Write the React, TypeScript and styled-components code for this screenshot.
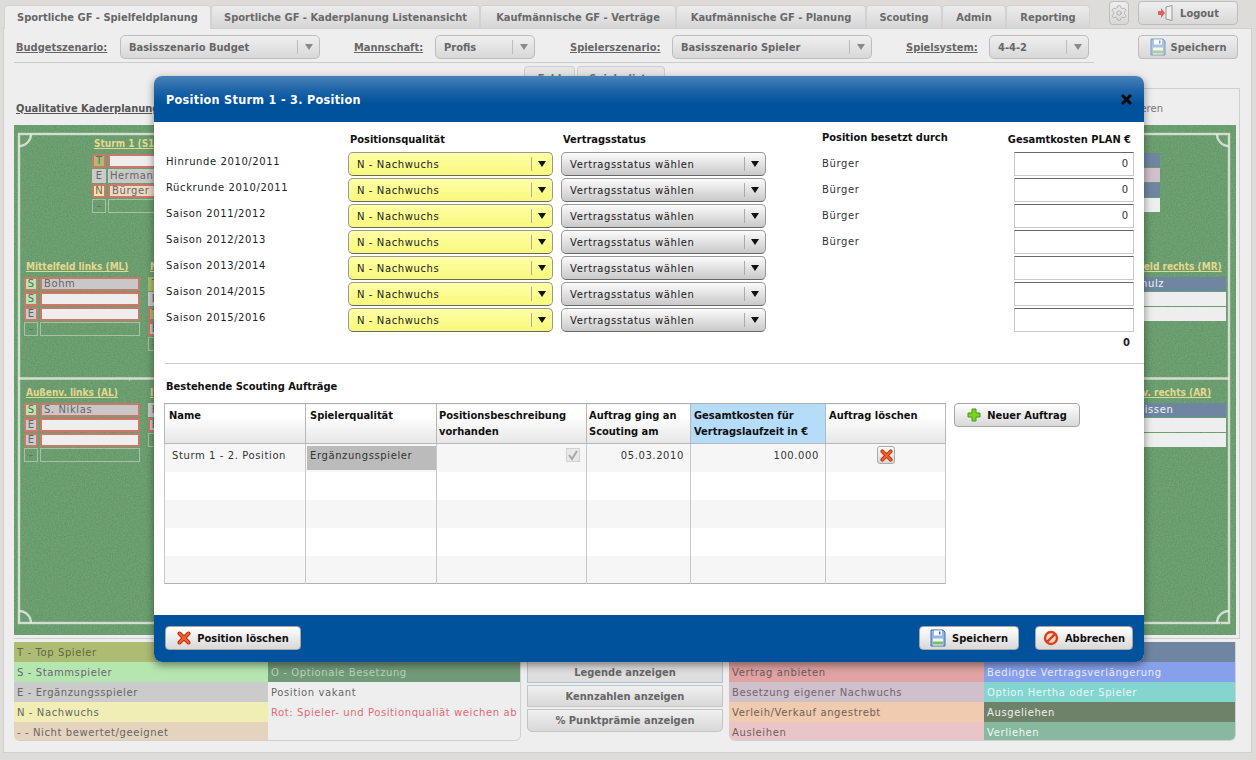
import React from "react";
import styled, { createGlobalStyle, css } from "styled-components";
import { Settings } from "lucide-react";

const REGULAR = `"DejaVu Sans", Verdana, sans-serif`;
const BOLD = `"DejaVu Sans Condensed", "DejaVu Sans", Tahoma, sans-serif`;

const spaced = css`
  letter-spacing: 0.6px;
`;

const QUALITY_COLORS: Record<string, string> = {
  T: "#adbb73",
  S: "#b6e6b0",
  E: "#cbcbcb",
  N: "#f3e5a8",
  "-": "transparent",
};

type Slot = {
  q: string;
  name?: string;
  fill?: string;
  ink?: string;
  bad?: boolean;
};

type Spot = { title: string; x: number; y: number; flushTitle?: boolean; slots: Slot[] };

const SPOTS: Spot[] = [
  {
    title: "Sturm 1 (S1)",
    x: 78,
    y: 12,
    slots: [
      { q: "T", fill: "#eeeeee", bad: true },
      { q: "E", name: "Hermann", fill: "#c8c8c8" },
      { q: "N", name: "Bürger", fill: "#eed9c5", bad: true },
      { q: "-" },
    ],
  },
  {
    title: "Mittelfeld links (ML)",
    x: 10,
    y: 135,
    slots: [
      { q: "S", name: "Bohm", fill: "#c8c8c8", bad: true },
      { q: "S", fill: "#eeeeee", bad: true },
      { q: "E", fill: "#eeeeee", bad: true },
      { q: "-" },
    ],
  },
  {
    title: "M",
    x: 134,
    y: 135,
    slots: [
      { q: "T", fill: "#c8c8c8" },
      { q: "E", fill: "#eeeeee" },
      { q: "T", fill: "#eeeeee", bad: true },
      { q: "E", fill: "#eeeeee", bad: true },
      { q: "-" },
    ],
  },
  {
    title: "Außenv. links (AL)",
    x: 10,
    y: 261,
    slots: [
      { q: "S", name: "S. Niklas", fill: "#c8c8c8", bad: true },
      { q: "E", fill: "#eeeeee", bad: true },
      { q: "E", fill: "#eeeeee", bad: true },
      { q: "-" },
    ],
  },
  {
    title: "I",
    x: 134,
    y: 261,
    slots: [
      { q: "E", fill: "#c8c8c8" },
      { q: "E", fill: "#eeeeee", bad: true },
      { q: "-" },
    ],
  },
  {
    title: "",
    x: 1030,
    y: 11,
    slots: [
      { q: "S", fill: "#6f86a2" },
      { q: "E", fill: "#d0c0cc" },
      { q: "N", fill: "#6f86a2" },
      { q: "-", fill: "#eeeeee" },
    ],
  },
  {
    title: "Mittelfeld rechts (MR)",
    x: 1096,
    y: 135,
    flushTitle: true,
    slots: [
      { q: "S", name: "Schulz", fill: "#6f86a2", ink: "#f4f4f4" },
      { q: "E", fill: "#eeeeee" },
      { q: "-", fill: "#eeeeee" },
    ],
  },
  {
    title: "Außenv. rechts (AR)",
    x: 1096,
    y: 261,
    flushTitle: true,
    slots: [
      { q: "S", name: "Weissen", fill: "#6f86a2", ink: "#f4f4f4" },
      { q: "E", fill: "#eeeeee" },
      { q: "-", fill: "#eeeeee" },
    ],
  },
];

const TABS = [
  { label: "Sportliche GF - Spielfeldplanung", width: 207, active: true },
  { label: "Sportliche GF - Kaderplanung Listenansicht", width: 269 },
  { label: "Kaufmännische GF - Verträge", width: 196 },
  { label: "Kaufmännische GF - Planung", width: 190 },
  { label: "Scouting", width: 76 },
  { label: "Admin", width: 64 },
  { label: "Reporting", width: 84 },
];

const SEASONS = [
  { label: "Hinrunde 2010/2011", holder: "Bürger", cost: "0" },
  { label: "Rückrunde 2010/2011", holder: "Bürger", cost: "0" },
  { label: "Saison 2011/2012", holder: "Bürger", cost: "0" },
  { label: "Saison 2012/2013", holder: "Bürger", cost: "" },
  { label: "Saison 2013/2014", holder: "", cost: "" },
  { label: "Saison 2014/2015", holder: "", cost: "" },
  { label: "Saison 2015/2016", holder: "", cost: "" },
];

const LEGEND_LEFT = [
  ["T - Top Spieler", "#adbb73", "#5d6a44"],
  ["S - Stammspieler", "#b6e6b0", "#667"],
  ["E - Ergänzungsspieler", "#cbcbcb", "#666"],
  ["N - Nachwuchs", "#f0edb5", "#666"],
  ["- - Nicht bewertet/geeignet", "#e5d4bd", "#666"],
];

const LEGEND_MIDDLE = [
  ["", "#eeeeee", "#666"],
  ["O - Optionale Besetzung", "#719a78", "#b8d4bc"],
  ["Position vakant", "#eeeeee", "#666"],
  ["Rot: Spieler- und Positionqualiät weichen ab", "#eeeeee", "#e06a74"],
  ["", "#eeeeee", "#666"],
];

const LEGEND_RIGHT_A = [
  ["", "#6f86a2", "#eee"],
  ["Vertrag anbieten", "#e0a3a3", "#6d5a5a"],
  ["Besetzung eigener Nachwuchs", "#d0c0cc", "#6d6670"],
  ["Verleih/Verkauf angestrebt", "#f0cbb0", "#6d6258"],
  ["Ausleihen", "#eac5c8", "#6d5f60"],
];

const LEGEND_RIGHT_B = [
  ["", "#6f86a2", "#eee"],
  ["Bedingte Vertragsverlängerung", "#86a0ec", "#e8eefc"],
  ["Option Hertha oder Spieler", "#84d4d0", "#e6f8f6"],
  ["Ausgeliehen", "#6e8269", "#f0f0ea"],
  ["Verliehen", "#88b8a0", "#f0f8f2"],
];

const COLUMNS = [141, 131, 150, 104, 135, 120];

const GlobalStyle = createGlobalStyle`
  html, body {
    margin: 0;
    padding: 0;
  }
  body {
    font-family: ${REGULAR};
    font-size: 10px;
    color: #333;
  }
`;

const Page = styled.div`
  position: relative;
  width: 1256px;
  height: 760px;
  overflow: hidden;
  background: #dddcd9;
`;

const TopBar = styled.div`
  display: flex;
  height: 28px;
  padding: 0 18px 0 4px;
`;

const Tabs = styled.div`
  display: flex;
  margin-top: 5px;
`;

const Tab = styled.div<{ $width: number; $active?: boolean }>`
  box-sizing: border-box;
  width: ${({ $width }) => $width}px;
  height: 23px;
  display: flex;
  align-items: center;
  justify-content: center;
  font: bold 11px ${BOLD};
  color: #6a6a6a;
  border: 1px solid #d2d2d2;
  border-bottom: none;
  border-radius: 4px 4px 0 0;
  background: linear-gradient(#ececec, #d6d6d6);
  ${({ $active }) =>
    $active &&
    css`
      height: 24px;
      color: #666;
      background: #eeeeee;
    `}
`;

const TopActions = styled.div`
  display: flex;
  margin-left: auto;
  padding-top: 1px;
  gap: 9px;
`;

const GearButton = styled.div`
  box-sizing: border-box;
  width: 20px;
  height: 24px;
  display: flex;
  align-items: center;
  justify-content: center;
  border: 1px solid #bdbdbd;
  border-radius: 4px;
  background: linear-gradient(#eeeeee, #d8d8d8);
  color: #a8a8a8;
`;

const FadedButton = styled.div`
  box-sizing: border-box;
  width: 100px;
  height: 24px;
  display: flex;
  align-items: center;
  justify-content: center;
  gap: 5px;
  font: bold 11px ${BOLD};
  color: #666;
  border: 1px solid #bdbdbd;
  border-radius: 4px;
  background: linear-gradient(#eeeeee, #d8d8d8);
`;

const Panel = styled.div`
  box-sizing: border-box;
  height: 725px;
  margin: 0 4px 0 3px;
  padding: 0 10px;
  background: #eeeeee;
  border: 1px solid #cfcfcf;
`;

const Toolbar = styled.div`
  display: flex;
  align-items: center;
  height: 24px;
  margin-top: 6px;
  padding-left: 2px;
`;

const ToolGroup = styled.div<{ $after?: number }>`
  display: flex;
  align-items: center;
  margin-right: ${({ $after }) => $after ?? 34}px;
`;

const ToolLabel = styled.span<{ $width: number }>`
  width: ${({ $width }) => $width}px;
  font: bold 11px ${BOLD};
  color: #666;
  text-decoration: underline;
`;

const ToolSelect = styled.div<{ $width: number }>`
  box-sizing: border-box;
  width: ${({ $width }) => $width}px;
  height: 24px;
  display: flex;
  align-items: center;
  justify-content: space-between;
  padding-left: 8px;
  font: bold 11px ${BOLD};
  color: #666;
  border: 1px solid #bdbdbd;
  border-radius: 5px;
  background: linear-gradient(#efefef, #d8d8d8);
`;

const ToolCaret = styled.span`
  width: 21px;
  height: 14px;
  display: flex;
  align-items: center;
  justify-content: center;
  border-left: 1px solid #bbb;
  &::after {
    content: "";
    border: 4px solid transparent;
    border-top: 6px solid #8a8a8a;
    border-bottom: none;
  }
`;

const ToolSave = styled(FadedButton)`
  margin-left: auto;
  margin-right: 3px;
`;

const ToolRule = styled.div`
  width: 1080px;
  height: 1px;
  margin-top: 3px;
  background: #cccccc;
`;

const SubTabs = styled.div`
  display: flex;
  gap: 2px;
  height: 22px;
  margin-top: 3px;
  padding-left: 510px;
`;

const SubTab = styled.div<{ $width: number }>`
  box-sizing: border-box;
  width: ${({ $width }) => $width}px;
  padding-top: 5px;
  text-align: center;
  font: bold 11px ${BOLD};
  color: #777;
  border: 1px solid #cfcfcf;
  border-bottom: none;
  border-radius: 4px 4px 0 0;
  background: #e6e6e6;
`;

const ContentBox = styled.div`
  box-sizing: border-box;
  width: 1226px;
  height: 551px;
  border-right: 1px solid #cfcfcf;
  border-bottom: 1px solid #cfcfcf;
`;

const BoxTopRule = styled.div`
  width: 500px;
  height: 1px;
  margin-left: auto;
  background: #cfcfcf;
`;

const BoxHead = styled.div`
  display: flex;
  align-items: center;
  justify-content: space-between;
  height: 36px;
  padding: 2px 0 0 2px;
  box-sizing: border-box;
`;

const BoxTitle = styled.span`
  font: bold 11px ${BOLD};
  color: #555;
  text-decoration: underline;
`;

const BoxAction = styled.span`
  margin-right: 76px;
  color: #777;
`;

const Pitch = styled.div`
  position: relative;
  width: 1222px;
  height: 510px;
  background: #72a276;
  overflow: hidden;
`;

const PitchDrawing = styled.svg`
  position: absolute;
  inset: 0;
`;

const SpotBox = styled.div<{ $x: number; $y: number }>`
  position: absolute;
  left: ${({ $x }) => $x}px;
  top: ${({ $y }) => $y}px;
  width: 116px;
`;

const SpotTitle = styled.div<{ $flush?: boolean }>`
  height: 14px;
  margin: 0 0 3px ${({ $flush }) => ($flush ? 0 : 2)}px;
  white-space: nowrap;
  font: bold 10px/14px ${BOLD};
  color: #e3d890;
  text-decoration: underline;
`;

const SlotRow = styled.div`
  display: flex;
  gap: 2px;
  height: 14px;
  margin-bottom: 1px;
`;

const slotBorder = css<{ $bad?: boolean; $empty?: boolean }>`
  box-sizing: border-box;
  height: 14px;
  line-height: ${({ $bad, $empty }) => ($bad ? 10 : $empty ? 12 : 14)}px;
  border: ${({ $bad, $empty }) =>
    $bad
      ? "2px solid #c8796a"
      : $empty
        ? "1px solid rgba(235, 240, 230, 0.45)"
        : "none"};
`;

const SlotLetter = styled.div<{ $fill: string; $bad?: boolean; $empty?: boolean }>`
  ${slotBorder};
  width: 14px;
  text-align: center;
  color: #666;
  background: ${({ $fill }) => $fill};
`;

const SlotName = styled.div<{ $fill?: string; $ink?: string; $bad?: boolean; $empty?: boolean }>`
  ${slotBorder};
  ${spaced};
  flex: 1;
  padding-left: 2px;
  white-space: nowrap;
  overflow: hidden;
  color: ${({ $ink }) => $ink || "#666"};
  background: ${({ $fill }) => $fill || "transparent"};
`;

const BottomRow = styled.div`
  display: flex;
  gap: 6px;
  margin-top: 3px;
`;

const Legend = styled.div<{ $split: number }>`
  box-sizing: border-box;
  width: 507px;
  height: 99px;
  display: grid;
  grid-template-columns: ${({ $split }) => $split}px 1fr;
  overflow: hidden;
  border-radius: 0 0 6px 6px;
  border-bottom: 1px solid #d0d0d0;
  border-right: 1px solid #d0d0d0;
`;

const LegendColumn = styled.div`
  display: flex;
  flex-direction: column;
`;

const LegendCell = styled.div<{ $fill: string; $ink: string }>`
  ${spaced};
  flex: 0 0 20px;
  padding-left: 3px;
  line-height: 22px;
  white-space: nowrap;
  overflow: hidden;
  color: ${({ $ink }) => $ink};
  background: ${({ $fill }) => $fill};
`;

const MiddleStack = styled.div`
  width: 196px;
  display: flex;
  flex-direction: column;
  gap: 2px;
  margin-top: 19px;
`;

const MiddleButton = styled.div<{ $selected?: boolean; $last?: boolean }>`
  box-sizing: border-box;
  height: 22px;
  display: flex;
  align-items: center;
  justify-content: center;
  font: bold 11px ${BOLD};
  color: #666;
  border: 1px solid #c4c4c4;
  background: linear-gradient(#f0f0f0, #d8d8d8);
  ${({ $selected }) =>
    $selected &&
    css`
      border-color: #a8c4da;
      background: #dedede;
    `}
  ${({ $last }) =>
    $last &&
    css`
      height: 23px;
      border-radius: 0 0 5px 5px;
    `}
`;

const Modal = styled.div`
  position: absolute;
  left: 154px;
  top: 76px;
  width: 990px;
  height: 586px;
  display: flex;
  flex-direction: column;
  border-radius: 8px;
  background: #ffffff;
  box-shadow: 0 3px 8px rgba(0, 0, 0, 0.45);
`;

const ModalHead = styled.div`
  flex: 0 0 46px;
  display: flex;
  align-items: center;
  justify-content: space-between;
  padding: 0 12px;
  box-sizing: border-box;
  border-radius: 8px 8px 0 0;
  background: linear-gradient(#4a82b6 0%, #1f65a8 30%, #00529c 60%, #00529c 100%);
  color: #ffffff;
  font: bold 12.5px ${BOLD};
  letter-spacing: 0.3px;
`;

const ModalBody = styled.div`
  flex: 1;
  box-sizing: border-box;
  padding-top: 9px;
`;

const FormRow = styled.div`
  display: grid;
  grid-template-columns: 182px 213px 261px 192px 120px;
  align-items: center;
  height: 24px;
  margin-bottom: 2px;
  padding-left: 12px;
`;

const FormHead = styled(FormRow)`
  height: 21px;
  margin-bottom: 0;
  align-items: start;
`;

const HeadCell = styled.div<{ $up?: boolean; $right?: boolean }>`
  font: bold 11px/18px ${BOLD};
  color: #111;
  margin-top: ${({ $up }) => ($up ? -2 : 0)}px;
  padding-left: ${({ $up }) => ($up ? 0 : 2)}px;
  white-space: nowrap;
  ${({ $right }) =>
    $right &&
    css`
      margin-left: -20px;
      text-align: right;
      padding-right: 3px;
    `}
`;

const SeasonLabel = styled.div`
  ${spaced};
  padding-bottom: 6px;
  color: #222;
`;

const HolderLabel = styled.div`
  ${spaced};
  padding-bottom: 2px;
  color: #333;
`;

const DropDown = styled.div<{ $yellow?: boolean }>`
  ${spaced};
  box-sizing: border-box;
  width: 205px;
  height: 24px;
  display: flex;
  align-items: center;
  justify-content: space-between;
  padding-left: 8px;
  color: #222;
  border: 1px solid #999;
  border-bottom-color: #666;
  border-radius: 5px;
  background: ${({ $yellow }) =>
    $yellow
      ? "linear-gradient(#ffffa6, #f8f87c)"
      : "linear-gradient(#fbfbfb, #c9c9c9)"};
`;

const DropCaret = styled.span`
  width: 20px;
  height: 14px;
  display: flex;
  align-items: center;
  justify-content: center;
  border-left: 1px solid #aaa;
  &::after {
    content: "";
    border: 4px solid transparent;
    border-top: 6px solid #111;
    border-bottom: none;
  }
`;

const CostInput = styled.div`
  box-sizing: border-box;
  width: 120px;
  height: 24px;
  padding-right: 5px;
  line-height: 22px;
  text-align: right;
  color: #333;
  background: #ffffff;
  border: 1px solid #c8c8c8;
  border-top-color: #666;
`;

const TotalRow = styled.div`
  height: 22px;
  line-height: 22px;
  text-align: right;
  padding-right: 14px;
  margin-top: -2px;
  font-weight: bold;
  color: #222;
`;

const Divider = styled.div`
  height: 1px;
  margin: 9px 0 0 11px;
  background: #cccccc;
`;

const SectionTitle = styled.div`
  height: 39px;
  padding: 16px 0 0 12px;
  box-sizing: border-box;
  font: bold 11px ${BOLD};
  color: #111;
`;

const TableRow = styled.div`
  display: flex;
  gap: 8px;
  padding-left: 10px;
  align-items: flex-start;
`;

const OrderTable = styled.table`
  width: 782px;
  table-layout: fixed;
  border-collapse: collapse;
  border: 1px solid #b0b0b0;
`;

const HeadCol = styled.th<{ $blue?: boolean; $pad?: number }>`
  height: 40px;
  padding: 4px 2px 0 ${({ $pad }) => $pad ?? 4}px;
  box-sizing: border-box;
  vertical-align: top;
  text-align: left;
  font: bold 11px/16px ${BOLD};
  color: #111;
  border: 1px solid #b8b8b8;
  border-top: none;
  background: ${({ $blue }) =>
    $blue ? "#b5dcf8" : "linear-gradient(#ffffff 30%, #e6e6e6)"};
`;

const BodyRow = styled.tr<{ $striped?: boolean }>`
  height: 28px;
  background: ${({ $striped }) => ($striped ? "#f6f6f6" : "#ffffff")};
`;

const BodyCell = styled.td<{ $align?: string; $flush?: boolean }>`
  ${spaced};
  padding: 0 6px ${({ $flush }) => ($flush ? 0 : 5)}px 7px;
  color: #333;
  text-align: ${({ $align }) => $align || "left"};
  border-left: 1px solid #c8c8c8;
  border-right: 1px solid #c8c8c8;
  white-space: nowrap;
`;

const QualityChip = styled.div`
  margin-left: -6px;
  margin-right: -6px;
  height: 24px;
  padding-left: 3px;
  line-height: 19px;
  background: #bbbbbb;
  color: #333;
`;

const CheckBox = styled.span`
  box-sizing: border-box;
  display: inline-flex;
  align-items: center;
  justify-content: center;
  width: 14px;
  height: 14px;
  vertical-align: middle;
  border: 1px solid #d2d2d2;
  background: #e8e8e8;
`;

const DeleteButton = styled.span`
  box-sizing: border-box;
  display: inline-flex;
  align-items: center;
  justify-content: center;
  width: 18px;
  height: 18px;
  vertical-align: middle;
  border: 1px solid #aaa;
  border-radius: 3px;
  background: linear-gradient(#fbfbfb, #d8d8d8);
`;

const ActionButton = styled.div<{ $width: number }>`
  box-sizing: border-box;
  width: ${({ $width }) => $width}px;
  height: 24px;
  display: flex;
  align-items: center;
  justify-content: center;
  gap: 6px;
  font: bold 11px ${BOLD};
  color: #111;
  border: 1px solid #a6a6a6;
  border-radius: 4px;
  background: linear-gradient(#ffffff, #d8d8d8);
`;

const ModalFoot = styled.div`
  flex: 0 0 47px;
  display: flex;
  align-items: flex-start;
  gap: 16px;
  box-sizing: border-box;
  padding: 11px 11px 0;
  border-radius: 0 0 8px 8px;
  background: #00529c;
`;

const FootSpacer = styled.div`
  flex: 1;
`;

const Floppy = ({ dim }: { dim?: boolean }) => (
  <svg width="16" height="18" viewBox="0 0 16 18">
    <path d="M1 1h12l2 2v14H1z" fill={dim ? "#a9c4e2" : "#8fb8e8"} stroke={dim ? "#7d9cc0" : "#3f6fb0"} />
    <rect x="4" y="1.5" width="8" height="5" fill="#ffffff" />
    <rect x="9" y="2.5" width="1.5" height="3" fill={dim ? "#7d9cc0" : "#3f6fb0"} />
    <rect x="3" y="9.5" width="10" height="7" fill="#f4f6ee" />
    <rect x="3" y="12.5" width="10" height="3" fill={dim ? "#a8d09a" : "#78c060"} />
  </svg>
);

const DoorIcon = () => (
  <svg width="18" height="16" viewBox="0 0 18 16">
    <path d="M9 2l6-1.5v15L9 14z" fill="#efefef" stroke="#999" />
    <path d="M1 6h3V3l4 5-4 5v-3H1z" fill="#e0605a" />
  </svg>
);

const CrossIcon = ({ size = 14 }: { size?: number }) => (
  <svg width={size} height={size} viewBox="0 0 14 14">
    <path d="M2.5 2.5l9 9M11.5 2.5l-9 9" stroke="#b8280c" strokeWidth="4" strokeLinecap="round" />
    <path d="M2.5 2.5l9 9M11.5 2.5l-9 9" stroke="#f0602a" strokeWidth="2.4" strokeLinecap="round" />
  </svg>
);

const PlusIcon = () => (
  <svg width="14" height="14" viewBox="0 0 14 14">
    <path d="M5 1h4v4h4v4H9v4H5V9H1V5h4z" fill="#7ed321" stroke="#3f9a16" />
  </svg>
);

const ForbidIcon = () => (
  <svg width="16" height="16" viewBox="0 0 16 16">
    <circle cx="8" cy="8" r="6" fill="#fbd8c8" stroke="#d8401c" strokeWidth="2.4" />
    <path d="M3.8 12.2l8.4-8.4" stroke="#d8401c" strokeWidth="2.4" />
  </svg>
);

const TickIcon = () => (
  <svg width="12" height="12" viewBox="0 0 12 12">
    <path d="M2 6l3 4 5-8" fill="none" stroke="#a8a8a8" strokeWidth="2" />
  </svg>
);

const CloseIcon = () => (
  <svg width="11" height="11" viewBox="0 0 11 11">
    <path d="M1 1l9 9M10 1l-9 9" stroke="#0a0a0a" strokeWidth="3" />
  </svg>
);

const PitchLines = () => (
  <PitchDrawing width="1222" height="510" viewBox="0 0 1222 510">
    <defs>
      <filter id="grain" x="0" y="0" width="100%" height="100%">
        <feTurbulence type="fractalNoise" baseFrequency="0.7" numOctaves="2" seed="4" />
        <feColorMatrix values="0 0 0 0 0  0 0 0 0 0.1  0 0 0 0 0  0 0 0 0.3 -0.09" />
      </filter>
      <filter id="rough">
        <feTurbulence type="fractalNoise" baseFrequency="0.35" numOctaves="1" seed="9" />
        <feDisplacementMap in="SourceGraphic" scale="1.6" />
      </filter>
    </defs>
    <rect width="1222" height="510" filter="url(#grain)" />
    <g fill="none" stroke="#e6eadf" strokeOpacity="0.85" strokeWidth="2.4" filter="url(#rough)">
      <rect x="5" y="9" width="1210" height="489" />
      <path d="M4 253.5h1212" />
      <path d="M5 21a12 12 0 0 0 12-12" />
      <path d="M1203 9a12 12 0 0 0 12 12" />
      <path d="M5 486a12 12 0 0 1 12 12" />
      <path d="M1203 498a12 12 0 0 1 12-12" />
    </g>
  </PitchDrawing>
);

const LegendBlock = ({ left, right, split }: { left: string[][]; right: string[][]; split: number }) => (
  <Legend $split={split}>
    <LegendColumn>
      {left.map(([text, fill, ink], i) => (
        <LegendCell key={i} $fill={fill} $ink={ink}>
          {text}
        </LegendCell>
      ))}
    </LegendColumn>
    <LegendColumn>
      {right.map(([text, fill, ink], i) => (
        <LegendCell key={i} $fill={fill} $ink={ink}>
          {text}
        </LegendCell>
      ))}
    </LegendColumn>
  </Legend>
);

export default function App() {
  return (
    <Page>
      <GlobalStyle />
      <TopBar>
        <Tabs>
          {TABS.map((tab) => (
            <Tab key={tab.label} $width={tab.width} $active={tab.active}>
              {tab.label}
            </Tab>
          ))}
        </Tabs>
        <TopActions>
          <GearButton>
            <Settings size={18} strokeWidth={1.1} />
          </GearButton>
          <FadedButton>
            <DoorIcon />
            Logout
          </FadedButton>
        </TopActions>
      </TopBar>

      <Panel>
        <Toolbar>
          <ToolGroup>
            <ToolLabel $width={104}>Budgetszenario:</ToolLabel>
            <ToolSelect $width={200}>
              Basisszenario Budget
              <ToolCaret />
            </ToolSelect>
          </ToolGroup>
          <ToolGroup $after={35}>
            <ToolLabel $width={81}>Mannschaft:</ToolLabel>
            <ToolSelect $width={100}>
              Profis
              <ToolCaret />
            </ToolSelect>
          </ToolGroup>
          <ToolGroup>
            <ToolLabel $width={102}>Spielerszenario:</ToolLabel>
            <ToolSelect $width={200}>
              Basisszenario Spieler
              <ToolCaret />
            </ToolSelect>
          </ToolGroup>
          <ToolGroup>
            <ToolLabel $width={83}>Spielsystem:</ToolLabel>
            <ToolSelect $width={100}>
              4-4-2
              <ToolCaret />
            </ToolSelect>
          </ToolGroup>
          <ToolSave>
            <Floppy dim />
            Speichern
          </ToolSave>
        </Toolbar>
        <ToolRule />
        <SubTabs>
          <SubTab $width={51}>Feld</SubTab>
          <SubTab $width={88}>Spielerliste</SubTab>
        </SubTabs>

        <ContentBox>
          <BoxTopRule />
          <BoxHead>
            <BoxTitle>Qualitative Kaderplanung</BoxTitle>
            <BoxAction>Aktualisieren</BoxAction>
          </BoxHead>
          <Pitch>
            <PitchLines />
            {SPOTS.map((spot, n) => (
              <SpotBox key={n} $x={spot.x} $y={spot.y}>
                <SpotTitle $flush={spot.flushTitle}>{spot.title}</SpotTitle>
                {spot.slots.map((slot, i) => {
                  const empty = slot.q === "-";
                  return (
                    <SlotRow key={i}>
                      <SlotLetter $fill={QUALITY_COLORS[slot.q]} $bad={slot.bad} $empty={empty}>
                        {empty ? "–" : slot.q}
                      </SlotLetter>
                      <SlotName $fill={slot.fill} $ink={slot.ink} $bad={slot.bad} $empty={empty && !slot.fill}>
                        {slot.name}
                      </SlotName>
                    </SlotRow>
                  );
                })}
              </SpotBox>
            ))}
          </Pitch>
        </ContentBox>

        <BottomRow>
          <LegendBlock left={LEGEND_LEFT} right={LEGEND_MIDDLE} split={254} />
          <MiddleStack>
            <MiddleButton $selected>Legende anzeigen</MiddleButton>
            <MiddleButton>Kennzahlen anzeigen</MiddleButton>
            <MiddleButton $last>% Punktprämie anzeigen</MiddleButton>
          </MiddleStack>
          <LegendBlock left={LEGEND_RIGHT_A} right={LEGEND_RIGHT_B} split={255} />
        </BottomRow>
      </Panel>

      <Modal>
        <ModalHead>
          Position Sturm 1 - 3. Position
          <CloseIcon />
        </ModalHead>
        <ModalBody>
          <FormHead>
            <span />
            <HeadCell>Positionsqualität</HeadCell>
            <HeadCell>Vertragsstatus</HeadCell>
            <HeadCell $up>Position besetzt durch</HeadCell>
            <HeadCell $right>Gesamtkosten PLAN €</HeadCell>
          </FormHead>
          {SEASONS.map((season) => (
            <FormRow key={season.label}>
              <SeasonLabel>{season.label}</SeasonLabel>
              <DropDown $yellow>
                N - Nachwuchs
                <DropCaret />
              </DropDown>
              <DropDown>
                Vertragsstatus wählen
                <DropCaret />
              </DropDown>
              <HolderLabel>{season.holder}</HolderLabel>
              <CostInput>{season.cost}</CostInput>
            </FormRow>
          ))}
          <TotalRow>0</TotalRow>
          <Divider />
          <SectionTitle>Bestehende Scouting Aufträge</SectionTitle>
          <TableRow>
            <OrderTable>
              <colgroup>
                {COLUMNS.map((width, i) => (
                  <col key={i} width={width} />
                ))}
              </colgroup>
              <thead>
                <tr>
                  <HeadCol>Name</HeadCol>
                  <HeadCol>Spielerqualität</HeadCol>
                  <HeadCol $pad={2}>
                    Positionsbeschreibung
                    <br />
                    vorhanden
                  </HeadCol>
                  <HeadCol $pad={2}>
                    Auftrag ging an
                    <br />
                    Scouting am
                  </HeadCol>
                  <HeadCol $blue $pad={3}>
                    Gesamtkosten für
                    <br />
                    Vertragslaufzeit in €
                  </HeadCol>
                  <HeadCol $pad={3}>Auftrag löschen</HeadCol>
                </tr>
              </thead>
              <tbody>
                <BodyRow $striped>
                  <BodyCell>Sturm 1 - 2. Position</BodyCell>
                  <BodyCell $flush>
                    <QualityChip>Ergänzungsspieler</QualityChip>
                  </BodyCell>
                  <BodyCell $align="right">
                    <CheckBox>
                      <TickIcon />
                    </CheckBox>
                  </BodyCell>
                  <BodyCell $align="right">05.03.2010</BodyCell>
                  <BodyCell $align="right">100.000</BodyCell>
                  <BodyCell $align="center">
                    <DeleteButton>
                      <CrossIcon size={13} />
                    </DeleteButton>
                  </BodyCell>
                </BodyRow>
                {[false, true, false, true].map((striped, i) => (
                  <BodyRow key={i} $striped={striped}>
                    {COLUMNS.map((_, c) => (
                      <BodyCell key={c} />
                    ))}
                  </BodyRow>
                ))}
              </tbody>
            </OrderTable>
            <ActionButton $width={126}>
              <PlusIcon />
              Neuer Auftrag
            </ActionButton>
          </TableRow>
        </ModalBody>
        <ModalFoot>
          <ActionButton $width={136}>
            <CrossIcon />
            Position löschen
          </ActionButton>
          <FootSpacer />
          <ActionButton $width={100}>
            <Floppy />
            Speichern
          </ActionButton>
          <ActionButton $width={98}>
            <ForbidIcon />
            Abbrechen
          </ActionButton>
        </ModalFoot>
      </Modal>
    </Page>
  );
}
